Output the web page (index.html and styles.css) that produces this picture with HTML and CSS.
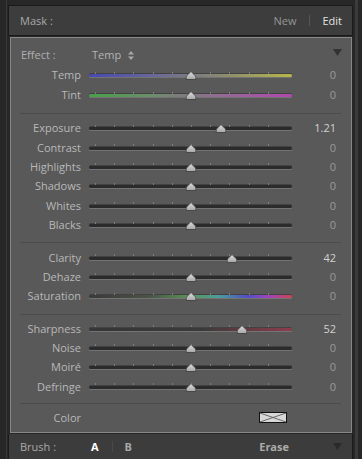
FILE: index.html
```html
<!DOCTYPE html>
<html>
<head>
<meta charset="utf-8">
<link rel="stylesheet" href="styles.css">
</head>
<body>
<div class="frame">
  <div class="rail-left"></div>
  <div class="main">
    <div class="topstrip"></div>
    <div class="header">
      <span class="hlabel">Mask :</span>
      <span class="spacer"></span>
      <span class="hnew">New</span>
      <span class="divider"></span>
      <span class="hedit">Edit</span>
    </div>
    <div class="panel">
      <div class="section s1">
        <div class="effect">
          <span class="elabel">Effect :</span>
          <span class="evalue">Temp</span>
          <svg class="updown" width="6" height="9" viewBox="0 0 6 9"><path d="M3 0 L6 3.5 H0 Z M3 9 L6 5.5 H0 Z" fill="#a8a8a8"/></svg>
          <span class="spacer"></span>
          <svg class="tri" width="9" height="7" viewBox="0 0 9 7"><path d="M0 0 H9 L4.5 7 Z" fill="#333"/></svg>
        </div>
        <div class="row r20"><span class="lbl">Temp</span><div class="slider"><div class="track temp"></div><svg class="thumb" style="left:50.2%" width="11" height="9" viewBox="0 0 11 9"><path d="M5.5 0.5 L9.6 4.6 Q10.3 5.4 10.3 6.4 V8.5 H0.7 V6.4 Q0.7 5.4 1.4 4.6 Z" fill="url(#g)" stroke="#3a3a3a" stroke-width="0.8"/></svg></div><span class="val">0</span></div>
        <div class="row r20"><span class="lbl">Tint</span><div class="slider"><div class="track tint"></div><svg class="thumb" style="left:50.2%" width="11" height="9" viewBox="0 0 11 9"><path d="M5.5 0.5 L9.6 4.6 Q10.3 5.4 10.3 6.4 V8.5 H0.7 V6.4 Q0.7 5.4 1.4 4.6 Z" fill="url(#g)" stroke="#3a3a3a" stroke-width="0.8"/></svg></div><span class="val">0</span></div>
      </div>
      <div class="sep"></div>
      <div class="section s2">
        <div class="row"><span class="lbl">Exposure</span><div class="slider"><div class="track"></div><svg class="thumb" style="left:65%" width="11" height="9" viewBox="0 0 11 9"><path d="M5.5 0.5 L9.6 4.6 Q10.3 5.4 10.3 6.4 V8.5 H0.7 V6.4 Q0.7 5.4 1.4 4.6 Z" fill="url(#g)" stroke="#3a3a3a" stroke-width="0.8"/></svg></div><span class="val on">1.21</span></div>
        <div class="row"><span class="lbl">Contrast</span><div class="slider"><div class="track"></div><svg class="thumb" style="left:50.2%" width="11" height="9" viewBox="0 0 11 9"><path d="M5.5 0.5 L9.6 4.6 Q10.3 5.4 10.3 6.4 V8.5 H0.7 V6.4 Q0.7 5.4 1.4 4.6 Z" fill="url(#g)" stroke="#3a3a3a" stroke-width="0.8"/></svg></div><span class="val">0</span></div>
        <div class="row"><span class="lbl">Highlights</span><div class="slider"><div class="track"></div><svg class="thumb" style="left:50.2%" width="11" height="9" viewBox="0 0 11 9"><path d="M5.5 0.5 L9.6 4.6 Q10.3 5.4 10.3 6.4 V8.5 H0.7 V6.4 Q0.7 5.4 1.4 4.6 Z" fill="url(#g)" stroke="#3a3a3a" stroke-width="0.8"/></svg></div><span class="val">0</span></div>
        <div class="row"><span class="lbl">Shadows</span><div class="slider"><div class="track"></div><svg class="thumb" style="left:50.2%" width="11" height="9" viewBox="0 0 11 9"><path d="M5.5 0.5 L9.6 4.6 Q10.3 5.4 10.3 6.4 V8.5 H0.7 V6.4 Q0.7 5.4 1.4 4.6 Z" fill="url(#g)" stroke="#3a3a3a" stroke-width="0.8"/></svg></div><span class="val">0</span></div>
        <div class="row"><span class="lbl">Whites</span><div class="slider"><div class="track"></div><svg class="thumb" style="left:50.2%" width="11" height="9" viewBox="0 0 11 9"><path d="M5.5 0.5 L9.6 4.6 Q10.3 5.4 10.3 6.4 V8.5 H0.7 V6.4 Q0.7 5.4 1.4 4.6 Z" fill="url(#g)" stroke="#3a3a3a" stroke-width="0.8"/></svg></div><span class="val">0</span></div>
        <div class="row"><span class="lbl">Blacks</span><div class="slider"><div class="track"></div><svg class="thumb" style="left:50.2%" width="11" height="9" viewBox="0 0 11 9"><path d="M5.5 0.5 L9.6 4.6 Q10.3 5.4 10.3 6.4 V8.5 H0.7 V6.4 Q0.7 5.4 1.4 4.6 Z" fill="url(#g)" stroke="#3a3a3a" stroke-width="0.8"/></svg></div><span class="val">0</span></div>
      </div>
      <div class="sep"></div>
      <div class="section s3">
        <div class="row"><span class="lbl">Clarity</span><div class="slider"><div class="track"></div><svg class="thumb" style="left:70.5%" width="11" height="9" viewBox="0 0 11 9"><path d="M5.5 0.5 L9.6 4.6 Q10.3 5.4 10.3 6.4 V8.5 H0.7 V6.4 Q0.7 5.4 1.4 4.6 Z" fill="url(#g)" stroke="#3a3a3a" stroke-width="0.8"/></svg></div><span class="val on">42</span></div>
        <div class="row"><span class="lbl">Dehaze</span><div class="slider"><div class="track"></div><svg class="thumb" style="left:50.2%" width="11" height="9" viewBox="0 0 11 9"><path d="M5.5 0.5 L9.6 4.6 Q10.3 5.4 10.3 6.4 V8.5 H0.7 V6.4 Q0.7 5.4 1.4 4.6 Z" fill="url(#g)" stroke="#3a3a3a" stroke-width="0.8"/></svg></div><span class="val">0</span></div>
        <div class="row"><span class="lbl">Saturation</span><div class="slider"><div class="track sat"></div><svg class="thumb" style="left:50.2%" width="11" height="9" viewBox="0 0 11 9"><path d="M5.5 0.5 L9.6 4.6 Q10.3 5.4 10.3 6.4 V8.5 H0.7 V6.4 Q0.7 5.4 1.4 4.6 Z" fill="url(#g)" stroke="#3a3a3a" stroke-width="0.8"/></svg></div><span class="val">0</span></div>
      </div>
      <div class="sep"></div>
      <div class="section s4">
        <div class="row"><span class="lbl">Sharpness</span><div class="slider"><div class="track sharp"></div><svg class="thumb" style="left:75.5%" width="11" height="9" viewBox="0 0 11 9"><path d="M5.5 0.5 L9.6 4.6 Q10.3 5.4 10.3 6.4 V8.5 H0.7 V6.4 Q0.7 5.4 1.4 4.6 Z" fill="url(#g)" stroke="#3a3a3a" stroke-width="0.8"/></svg></div><span class="val on">52</span></div>
        <div class="row"><span class="lbl">Noise</span><div class="slider"><div class="track"></div><svg class="thumb" style="left:50.2%" width="11" height="9" viewBox="0 0 11 9"><path d="M5.5 0.5 L9.6 4.6 Q10.3 5.4 10.3 6.4 V8.5 H0.7 V6.4 Q0.7 5.4 1.4 4.6 Z" fill="url(#g)" stroke="#3a3a3a" stroke-width="0.8"/></svg></div><span class="val">0</span></div>
        <div class="row"><span class="lbl">Moiré</span><div class="slider"><div class="track"></div><svg class="thumb" style="left:50.2%" width="11" height="9" viewBox="0 0 11 9"><path d="M5.5 0.5 L9.6 4.6 Q10.3 5.4 10.3 6.4 V8.5 H0.7 V6.4 Q0.7 5.4 1.4 4.6 Z" fill="url(#g)" stroke="#3a3a3a" stroke-width="0.8"/></svg></div><span class="val">0</span></div>
        <div class="row"><span class="lbl">Defringe</span><div class="slider"><div class="track"></div><svg class="thumb" style="left:50.2%" width="11" height="9" viewBox="0 0 11 9"><path d="M5.5 0.5 L9.6 4.6 Q10.3 5.4 10.3 6.4 V8.5 H0.7 V6.4 Q0.7 5.4 1.4 4.6 Z" fill="url(#g)" stroke="#3a3a3a" stroke-width="0.8"/></svg></div><span class="val">0</span></div>
      </div>
      <div class="sep"></div>
      <div class="section s5">
        <div class="row r20"><span class="lbl">Color</span><div class="swatchcell"><svg class="swatch" width="28" height="11" viewBox="0 0 28 11"><rect x="0.5" y="0.5" width="27" height="10" fill="#d8d8d8" stroke="#111"/><path d="M1 1 L14 5.5 L27 1 M1 10 L14 5.5 L27 10" stroke="#5a5a5a" stroke-width="0.9" fill="none"/></svg></div><span class="val"></span></div>
      </div>
    </div>
    <div class="brushbar">
      <span class="blabel">Brush :</span>
      <span class="bA">A</span>
      <span class="divider"></span>
      <span class="bB">B</span>
      <span class="spacer"></span>
      <span class="erase">Erase</span>
      <svg class="tri2" width="9" height="7" viewBox="0 0 9 7"><path d="M0 0 H9 L4.5 7 Z" fill="#2a2a2a"/></svg>
    </div>
  </div>
  <div class="rail-right"></div>
</div>
<svg width="0" height="0" class="defs"><defs><linearGradient id="g" x1="0" y1="0" x2="0" y2="1"><stop offset="0" stop-color="#dedede"/><stop offset="1" stop-color="#a6a6a6"/></linearGradient></defs></svg>
</body>
</html>
```
FILE: styles.css
```css
html, body {
  margin: 0;
  padding: 0;
  background: #272727;
  width: 362px;
  height: 459px;
  overflow: hidden;
  font-family: "Open Sans", "Noto Sans", sans-serif;
  font-size: 11px;
}
.defs { position: absolute; }
.frame {
  display: flex;
  height: 459px;
}
.rail-left {
  width: 1px;
  margin-left: 6px;
  margin-right: 1px;
  background: #383838;
}
.main {
  width: 345px;
  display: flex;
  flex-direction: column;
}
.rail-right {
  width: 3px;
  margin-left: 2px;
  background: #3b3b3b;
}
.topstrip { height: 5px; }
.spacer { flex: 1; }
.header {
  height: 30px;
  background: #3d3d3d;
  border: 1px solid #1b1b1b;
  display: flex;
  align-items: center;
  padding: 0 10px 0 11px;
}
.hlabel { color: #a9a9a9; }
.hnew { color: #969696; }
.hedit { color: #e0e0e0; }
.divider {
  width: 1px;
  height: 11px;
  background: #555;
  margin: 0 12px 0 13px;
}
.panel {
  margin: 1px 1px 0 2px;
  background: #595959;
  border: 1px solid #888;
  display: flex;
  flex-direction: column;
}
.section { display: flex; flex-direction: column; }
.s1 { padding: 7px 0 8px; }
.s2 { padding: 4px 0 7.6px; }
.s3 { padding: 4.5px 0 8.3px; }
.s4 { padding: 3.5px 0 6.9px; }
.s5 { padding: 4px 0 4px; }
.sep {
  height: 1px;
  background: #4b4b4b;
  margin: 0 10px 0 9px;
}
.effect {
  height: 20px;
  display: flex;
  align-items: center;
  padding: 0 9px 0 10px;
}
.elabel { width: 71px; color: #b0b0b0; }
.evalue { color: #b4b4b4; margin-right: 7px; }
.updown { margin-top: 1px; }
.tri { margin-top: -5px; }
.row {
  height: 19.4px;
  display: grid;
  grid-template-columns: 70px 203px 36px;
  column-gap: 8px;
  align-items: center;
}
.row.r20 { height: 20px; }
.lbl {
  text-align: right;
  color: #b8b8b8;
  white-space: nowrap;
}
.val {
  text-align: right;
  color: #9a9a9a;
}
.val.on { color: #d2d2d2; }
.slider {
  position: relative;
  height: 100%;
  display: flex;
  align-items: center;
}
.slider::before {
  content: "";
  position: absolute;
  left: 6px;
  right: 5px;
  top: calc(50% - 3px);
  height: 2px;
  background-image: repeating-linear-gradient(to right, #7c7c7c 0 1px, transparent 1px 19.2px);
}
.track {
  flex: 1;
  height: 3px;
  margin-top: 2px;
  border-radius: 2px;
  background: #2b2b2b;
  box-shadow: 0 1px 0 rgba(255,255,255,0.16), 0 -1px 0 rgba(0,0,0,0.25);
}
.track.temp {
  background: linear-gradient(to right, #4848b2, #66669c 30%, #8a8a72 65%, #b6b648);
}
.track.tint {
  background: linear-gradient(to right, #48a048, #6a8e6a 30%, #946a94 65%, #b048b0);
}
.track.sat {
  background: linear-gradient(to right, #3a3a3a 0%, #4c5446 30%, #5a9658 50%, #4c9c9c 64%, #5050c4 78%, #9e44c0 88%, #cc4452 100%);
}
.track.sharp {
  background: linear-gradient(to right, #363636 0%, #3a3a3a 55%, #8e3c4c 100%);
}
.thumb {
  position: absolute;
  top: calc(50% - 3.5px);
  transform: translateX(-50%);
}
.swatchcell {
  display: flex;
  justify-content: flex-end;
  padding-right: 5px;
}
.brushbar {
  margin-top: 1px;
  height: 26px;
  background: #3c3c3c;
  border-left: 1px solid #1b1b1b;
  border-right: 1px solid #1b1b1b;
  display: flex;
  align-items: center;
  padding: 0 10px 0 11px;
}
.blabel { width: 71px; color: #a9a9a9; }
.bA { color: #ffffff; font-weight: 700; }
.bB { color: #a9a9a9; font-weight: 700; }
.erase { color: #ababab; font-weight: 700; margin-right: 44px; }
.brushbar .divider { background: #4a4a4a; }
```
